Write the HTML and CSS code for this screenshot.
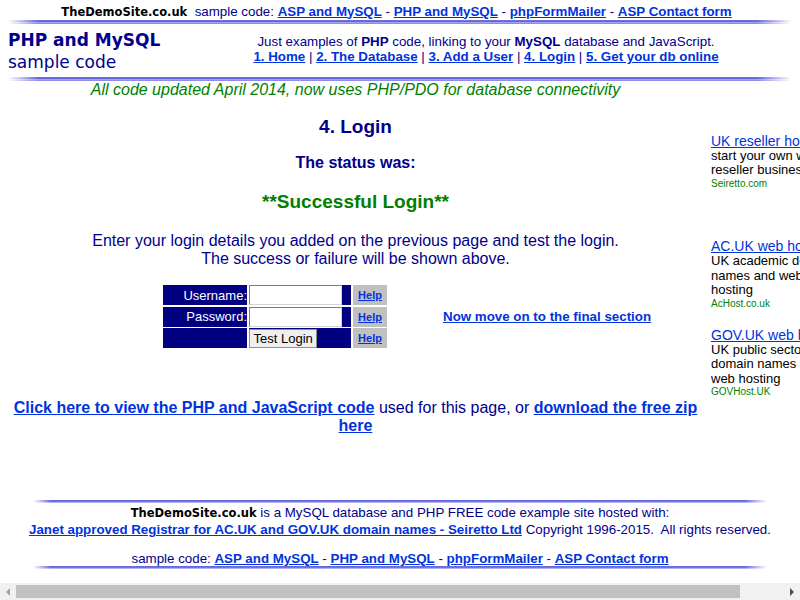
FILE: index.html
```html
<!DOCTYPE html>
<html lang="en">
<head>
<meta charset="utf-8">
<title>PHP and MySQL sample code - 4. Login</title>
<link rel="stylesheet" href="styles.css">
</head>
<body>
<div class="topbar">
  <span class="site">TheDemoSite.co.uk</span>&nbsp; sample code: <a href="#">ASP and MySQL</a> - <a href="#">PHP and MySQL</a> - <a href="#">phpFormMailer</a> - <a href="#">ASP Contact form</a>
</div>
<div class="rule"></div>
<div class="header">
  <div class="logo">
    <div class="logo-main">PHP and MySQL</div>
    <div class="logo-sub">sample code</div>
  </div>
  <div class="intro">
    <div>Just examples of <b>PHP</b> code, linking to your <b>MySQL</b> database and JavaScript.</div>
    <div class="nav"><a href="#">1. Home</a> | <a href="#">2. The Database</a> | <a href="#">3. Add a User</a> | <a href="#">4. Login</a> | <a href="#">5. Get your db online</a></div>
  </div>
</div>
<div class="rule"></div>
<div class="middle">
  <main class="content">
    <p class="updated">All code updated April 2014, now uses PHP/PDO for database connectivity</p>
    <h1 class="title">4. Login</h1>
    <h2 class="status-label">The status was:</h2>
    <p class="status">**Successful Login**</p>
    <p class="instructions">Enter your login details you added on the previous page and test the login.<br>The success or failure will be shown above.</p>
    <div class="login-row">
      <form class="login-form" action="#">
        <label class="cell label" for="user">Username:</label>
        <div class="cell field"><input class="text-input" id="user" type="text"></div>
        <div class="cell help"><a href="#">Help</a></div>
        <label class="cell label" for="pass">Password:</label>
        <div class="cell field"><input class="text-input" id="pass" type="password"></div>
        <div class="cell help"><a href="#">Help</a></div>
        <div class="cell label"></div>
        <div class="cell field"><button class="btn" type="button">Test Login</button></div>
        <div class="cell help"><a href="#">Help</a></div>
      </form>
      <a class="next" href="#">Now move on to the final section</a>
    </div>
    <p class="code-links"><a href="#">Click here to view the PHP and JavaScript code</a> used for this page, or <a href="#">download the free zip here</a></p>
  </main>
  <aside class="ads">
    <div class="ad">
      <a class="ad-title" href="#">UK reseller hosting</a>
      <div class="ad-text">start your own web<br>reseller business today</div>
      <div class="ad-url">Seiretto.com</div>
    </div>
    <div class="ad ad-second">
      <a class="ad-title" href="#">AC.UK web hosting</a>
      <div class="ad-text">UK academic domain<br>names and web<br>hosting</div>
      <div class="ad-url">AcHost.co.uk</div>
    </div>
    <div class="ad ad-third">
      <a class="ad-title" href="#">GOV.UK web hosting</a>
      <div class="ad-text">UK public sector<br>domain names<br>web hosting</div>
      <div class="ad-url">GOVHost.UK</div>
    </div>
  </aside>
</div>
<footer class="footer">
  <div class="rule rule-foot"></div>
  <div class="f1"><span class="site">TheDemoSite.co.uk</span> is a MySQL database and PHP FREE code example site hosted with:</div>
  <div class="f2"><a class="janet" href="#">Janet approved Registrar for AC.UK and GOV.UK domain names - Seiretto Ltd</a> Copyright 1996-2015.&nbsp; All rights reserved.</div>
  <div class="f3">sample code: <a href="#">ASP and MySQL</a> - <a href="#">PHP and MySQL</a> - <a href="#">phpFormMailer</a> - <a href="#">ASP Contact form</a></div>
  <div class="rule rule-foot"></div>
</footer>
<div class="hscroll" aria-hidden="true">
  <span class="arrow arrow-left"></span>
  <span class="thumb"></span>
  <span class="arrow arrow-right"></span>
</div>
</body>
</html>
```

FILE: styles.css
```css
html {
  background: #fff;
}

body {
  margin: 0;
  padding: 0 8px;
  font-family: "Liberation Sans", Arial, sans-serif;
  font-size: 13.33px;
  color: #00008b;
}

a {
  color: #0033dd;
  text-decoration: underline;
}

/* top bar */
.topbar {
  padding: 2.5px 7px 0 0;
  line-height: 17px;
  height: 17px;
  text-align: center;
  white-space: nowrap;
}

.topbar a,
.f3 a,
.nav a,
.janet {
  font-weight: bold;
}

.site {
  font-family: "DejaVu Sans", sans-serif;
  font-weight: bold;
  font-size: 11.5px;
  color: #000;
}

/* shaded rules */
.rule {
  height: 4px;
  background:
    linear-gradient(to right, #fff 0, rgba(255, 255, 255, 0) 30px, rgba(255, 255, 255, 0) calc(100% - 35px), #fff 100%),
    linear-gradient(#7b7be3, #5c5cd9 35%, #a9a9f0 60%, #8080e4 85%, #d0d0f6);
}

.rule-foot {
  height: 3px;
  margin: 0 25px;
  background:
    linear-gradient(to right, #fff 0, rgba(255, 255, 255, 0) 18px, rgba(255, 255, 255, 0) calc(100% - 22px), #fff 100%),
    linear-gradient(#7070e0, #5c5cd9 40%, #a9a9f0 75%, #c8c8f4);
}

/* header */
.header {
  display: flex;
  padding: 6.5px 0 2.5px;
}

.logo {
  width: 172px;
  flex-shrink: 0;
  color: #00008b;
}

.logo-main {
  font-family: "DejaVu Sans", sans-serif;
  font-weight: bold;
  font-size: 17px;
  line-height: 20px;
}

.logo-sub {
  font-family: "DejaVu Sans", sans-serif;
  font-size: 17px;
  line-height: 24px;
}

.intro {
  flex: 1;
  text-align: center;
  line-height: 14.5px;
  padding-top: 5.25px;
}

/* middle */
.middle {
  display: flex;
  gap: 8px;
  margin-right: -8px;
}

.content {
  width: 695px;
  flex-shrink: 0;
  text-align: center;
}

.updated {
  margin: 0.5px 0 0;
  color: #008000;
  font-style: italic;
  font-size: 16px;
  line-height: 18px;
}

.title {
  margin: 17px 0 0;
  font-size: 19px;
  line-height: 22px;
  font-weight: bold;
}

.status-label {
  margin: 16px 0 0;
  font-size: 16px;
  line-height: 18px;
  font-weight: bold;
}

.status {
  margin: 19px 0 0;
  font-size: 19px;
  line-height: 22px;
  font-weight: bold;
  color: #008000;
}

.instructions {
  margin: 19.3px 0 0;
  font-size: 16px;
  line-height: 18px;
}

.login-row {
  margin-top: 17px;
  display: flex;
  align-items: center;
  gap: 56px;
  padding-left: 155px;
  text-align: left;
}

.login-form {
  margin: 0;
  display: grid;
  grid-template-columns: 84px 102px 34px;
  grid-template-rows: repeat(3, 20px);
  gap: 1.5px 2px;
}

.cell {
  display: flex;
  align-items: center;
  background: #000080;
}

.label {
  justify-content: flex-end;
  color: #fff;
  font-size: 13px;
}

.help {
  background: #c0c0c0;
  justify-content: center;
  font-size: 11px;
  font-weight: bold;
}

.text-input {
  box-sizing: border-box;
  width: 93px;
  height: 20px;
  margin: 0;
  padding: 1px 2px;
  border: 1px solid;
  border-color: #7a7a7a #d4d4d4 #d4d4d4 #7a7a7a;
  background: #fff;
  font: 13px "Liberation Sans", Arial, sans-serif;
}

.btn {
  box-sizing: border-box;
  height: 19px;
  margin: 0;
  padding: 0 3.5px;
  border: 1px solid #8f8f8f;
  border-radius: 0;
  background: #efefef;
  color: #000;
  font: 13px/17px "Liberation Sans", Arial, sans-serif;
}

.next {
  font-weight: bold;
  font-size: 13.33px;
}

.code-links {
  margin: 50.8px 0 0;
  font-size: 16px;
  line-height: 18px;
}

.code-links a {
  font-weight: bold;
}

/* ads */
.ads {
  flex: 1;
  min-width: 0;
  overflow: hidden;
  padding-top: 53.15px;
}

.ad-title {
  display: block;
  font-size: 14px;
  line-height: 15px;
  white-space: nowrap;
}

.ad-text {
  font-size: 13px;
  line-height: 14.5px;
  color: #000;
  white-space: nowrap;
}

.ad-url {
  font-size: 10px;
  line-height: 12px;
  color: #008000;
  white-space: nowrap;
}

.ad-second {
  margin-top: 49.7px;
}

.ad-third {
  margin-top: 17.8px;
}

/* footer */
.footer {
  margin-top: 64.7px;
  text-align: center;
}

.f1 {
  margin-top: 1.5px;
  line-height: 17px;
}

.f2 {
  line-height: 15px;
}

.f3 {
  margin-top: 14px;
  line-height: 15px;
}

/* window scrollbar as seen in the reference */
.hscroll {
  position: fixed;
  left: 0;
  right: 0;
  bottom: 0;
  height: 17px;
  background: #f1f1f1;
  display: flex;
  align-items: center;
}

.arrow {
  width: 16px;
  height: 17px;
  display: flex;
  align-items: center;
  justify-content: center;
  flex-shrink: 0;
}

.arrow::before {
  content: "";
  border-top: 4px solid transparent;
  border-bottom: 4px solid transparent;
}

.arrow-left::before {
  border-right: 4px solid #a3a3a3;
}

.arrow-right {
  margin-left: auto;
}

.arrow-right::before {
  border-left: 4px solid #505050;
}

.thumb {
  width: 724px;
  height: 13px;
  background: #c1c1c1;
}
```
